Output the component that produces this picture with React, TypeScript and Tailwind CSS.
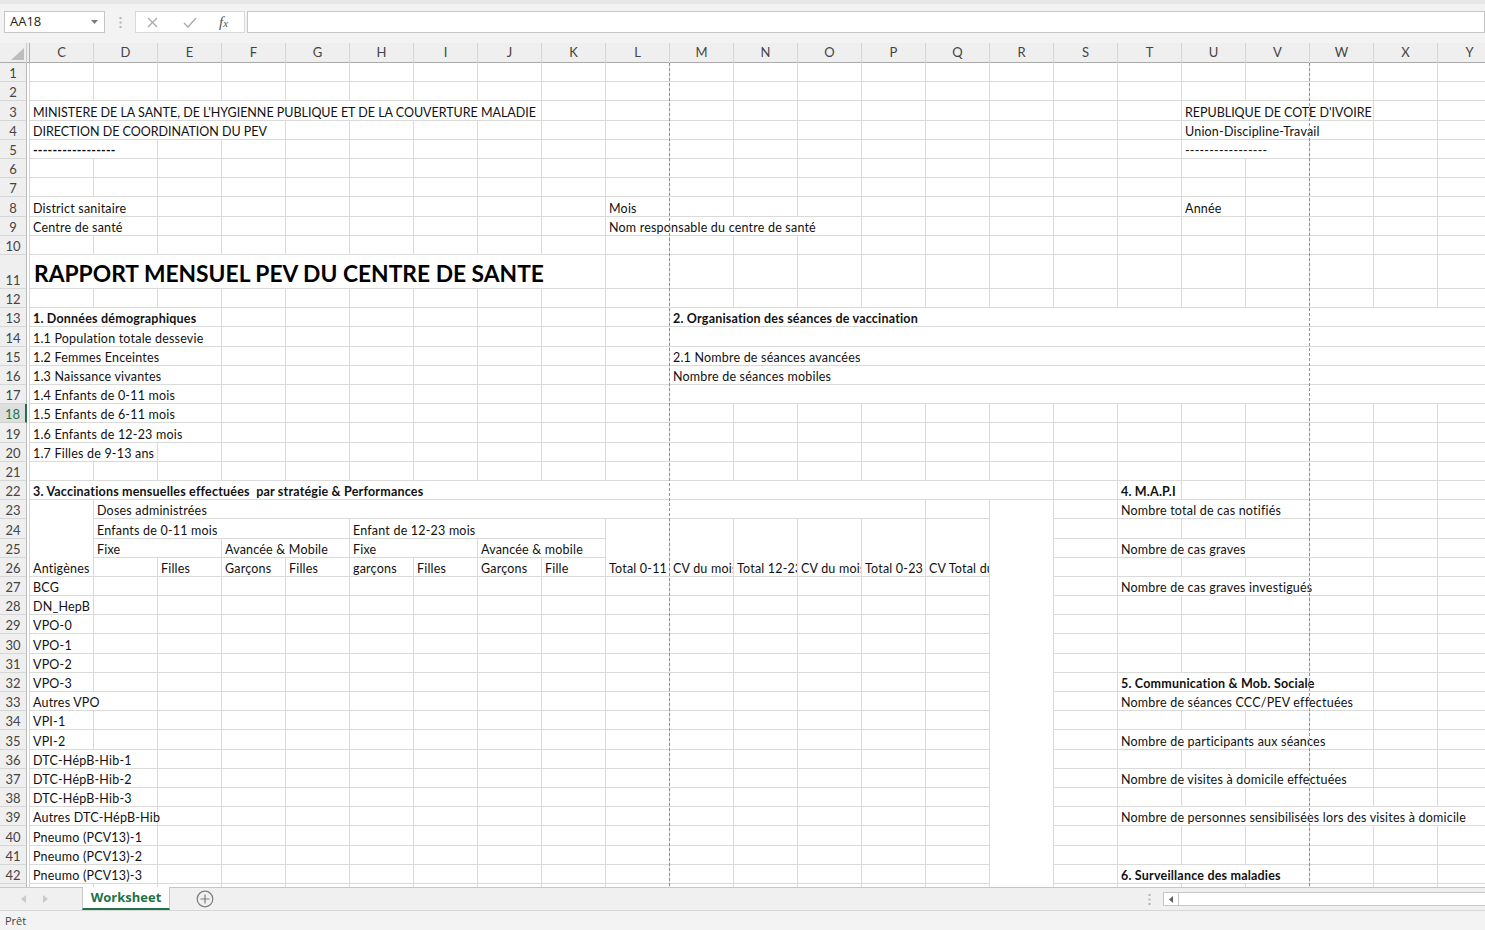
import React from 'react';

const COLS = ['C', 'D', 'E', 'F', 'G', 'H', 'I', 'J', 'K', 'L', 'M', 'N', 'O', 'P', 'Q', 'R', 'S', 'T', 'U', 'V', 'W', 'X', 'Y'];
const ROWS = 43;
const ACTIVE_ROW = 18;

type Cell = {
  r: number;
  c: string;
  cs?: number;
  rs?: number;
  t?: string;
  b?: boolean;
  clip?: boolean;
  big?: boolean;
  caps?: boolean;
};

// cells with text, merged ranges and the span a text overflows into
const CELLS: Cell[] = [
  { r: 3, c: 'C', cs: 8, t: "MINISTERE DE LA SANTE, DE L'HYGIENNE PUBLIQUE ET DE LA COUVERTURE MALADIE", caps: true },
  { r: 3, c: 'U', cs: 3, t: "REPUBLIQUE DE COTE D'IVOIRE", caps: true },
  { r: 4, c: 'C', cs: 4, t: 'DIRECTION DE COORDINATION DU PEV', caps: true },
  { r: 4, c: 'U', cs: 3, t: 'Union-Discipline-Travail' },
  { r: 5, c: 'C', cs: 2, t: '-----------------', b: true },
  { r: 5, c: 'U', cs: 2, t: '-----------------' },
  { r: 8, c: 'C', cs: 2, t: 'District sanitaire' },
  { r: 8, c: 'L', t: 'Mois' },
  { r: 8, c: 'U', t: 'Année' },
  { r: 9, c: 'C', cs: 2, t: 'Centre de santé' },
  { r: 9, c: 'L', cs: 4, t: 'Nom responsable du centre de santé' },
  { r: 11, c: 'C', cs: 9, t: 'RAPPORT MENSUEL PEV DU CENTRE DE SANTE', big: true },
  { r: 13, c: 'C', cs: 3, t: '1. Données démographiques', b: true },
  { r: 13, c: 'M', cs: 13, t: '2. Organisation des séances de vaccination', b: true },
  { r: 14, c: 'C', cs: 3, t: '1.1 Population totale dessevie' },
  { r: 14, c: 'M', cs: 13 },
  { r: 15, c: 'C', cs: 3, t: '1.2 Femmes Enceintes' },
  { r: 15, c: 'M', cs: 13, t: '2.1 Nombre de séances avancées' },
  { r: 16, c: 'C', cs: 3, t: '1.3 Naissance vivantes' },
  { r: 16, c: 'M', cs: 13, t: 'Nombre de séances mobiles' },
  { r: 17, c: 'C', cs: 3, t: '1.4 Enfants de 0-11 mois' },
  { r: 17, c: 'M', cs: 13 },
  { r: 18, c: 'C', cs: 3, t: '1.5 Enfants de 6-11 mois' },
  { r: 19, c: 'C', cs: 3, t: '1.6 Enfants de 12-23 mois' },
  { r: 20, c: 'C', cs: 2, t: '1.7 Filles de 9-13 ans' },
  { r: 22, c: 'C', cs: 16, t: '3. Vaccinations mensuelles effectuées\u00a0 par stratégie & Performances', b: true },
  { r: 22, c: 'T', t: '4. M.A.P.I', b: true },
  { r: 23, c: 'C', rs: 4, t: 'Antigènes' },
  { r: 23, c: 'D', cs: 13, t: 'Doses administrées' },
  { r: 23, c: 'R', rs: 21 },
  { r: 23, c: 'T', cs: 3, t: 'Nombre total de cas notifiés' },
  { r: 24, c: 'D', cs: 4, t: 'Enfants de 0-11 mois' },
  { r: 24, c: 'H', cs: 4, t: 'Enfant de 12-23 mois' },
  { r: 24, c: 'L', rs: 3, t: 'Total 0-11', clip: true },
  { r: 24, c: 'M', rs: 3, t: 'CV du mois', clip: true },
  { r: 24, c: 'N', rs: 3, t: 'Total 12-23', clip: true },
  { r: 24, c: 'O', rs: 3, t: 'CV du mois', clip: true },
  { r: 24, c: 'P', rs: 3, t: 'Total 0-23', clip: true },
  { r: 24, c: 'Q', rs: 3, t: 'CV Total du mois', clip: true },
  { r: 25, c: 'D', cs: 2, t: 'Fixe' },
  { r: 25, c: 'F', cs: 2, t: 'Avancée & Mobile' },
  { r: 25, c: 'H', cs: 2, t: 'Fixe' },
  { r: 25, c: 'J', cs: 2, t: 'Avancée & mobile' },
  { r: 25, c: 'T', cs: 3, t: 'Nombre de cas graves' },
  { r: 26, c: 'E', t: 'Filles' },
  { r: 26, c: 'F', t: 'Garçons' },
  { r: 26, c: 'G', t: 'Filles' },
  { r: 26, c: 'H', t: 'garçons' },
  { r: 26, c: 'I', t: 'Filles' },
  { r: 26, c: 'J', t: 'Garçons' },
  { r: 26, c: 'K', t: 'Fille' },
  { r: 27, c: 'C', t: 'BCG' },
  { r: 27, c: 'T', cs: 4, t: 'Nombre de cas graves investigués' },
  { r: 28, c: 'C', t: 'DN_HepB' },
  { r: 29, c: 'C', t: 'VPO-0' },
  { r: 30, c: 'C', t: 'VPO-1' },
  { r: 31, c: 'C', t: 'VPO-2' },
  { r: 32, c: 'C', t: 'VPO-3' },
  { r: 32, c: 'T', cs: 4, t: '5. Communication & Mob. Sociale', b: true },
  { r: 33, c: 'C', cs: 2, t: 'Autres VPO' },
  { r: 33, c: 'T', cs: 4, t: 'Nombre de séances CCC/PEV effectuées' },
  { r: 34, c: 'C', t: 'VPI-1' },
  { r: 35, c: 'C', t: 'VPI-2' },
  { r: 35, c: 'T', cs: 4, t: 'Nombre de participants aux séances' },
  { r: 36, c: 'C', cs: 2, t: 'DTC-HépB-Hib-1' },
  { r: 37, c: 'C', cs: 2, t: 'DTC-HépB-Hib-2' },
  { r: 37, c: 'T', cs: 4, t: 'Nombre de visites à domicile effectuées' },
  { r: 38, c: 'C', cs: 2, t: 'DTC-HépB-Hib-3' },
  { r: 39, c: 'C', cs: 2, t: 'Autres DTC-HépB-Hib' },
  { r: 39, c: 'T', cs: 6, t: 'Nombre de personnes sensibilisées lors des visites à domicile' },
  { r: 40, c: 'C', cs: 2, t: 'Pneumo (PCV13)-1' },
  { r: 41, c: 'C', cs: 2, t: 'Pneumo (PCV13)-2' },
  { r: 42, c: 'C', cs: 2, t: 'Pneumo (PCV13)-3' },
  { r: 42, c: 'T', cs: 3, t: '6. Surveillance des maladies', b: true },
];

const COL_SPAN: Record<number, string> = {
  1: 'col-span-1', 2: 'col-span-2', 3: 'col-span-3', 4: 'col-span-4', 6: 'col-span-6',
  8: 'col-span-8', 9: 'col-span-9', 13: 'col-span-13', 16: 'col-span-16',
};
const ROW_SPAN: Record<number, string> = { 1: 'row-span-1', 3: 'row-span-3', 4: 'row-span-4', 21: 'row-span-21' };

function Dots({ className }: { className?: string }) {
  return (
    <svg width="3" height="11" viewBox="0 0 3 11" className={className}>
      <rect x="0.5" y="0" width="2" height="2" fill="#b4b4b4" />
      <rect x="0.5" y="4.5" width="2" height="2" fill="#b4b4b4" />
      <rect x="0.5" y="9" width="2" height="2" fill="#b4b4b4" />
    </svg>
  );
}

function FormulaBar() {
  return (
    <div className="h-[43px] shrink-0 bg-[#f3f3f3] border-t-[4px] border-[#e6e6e6]">
      <div className="flex items-center pt-[7px] pl-[4px] h-[29px]">
        <div className="w-[101px] h-[22px] bg-white border border-[#c6c6c6] flex items-center justify-between pl-[5px] pr-[6px] text-[13px] text-[#222] font-['Open_Sans',sans-serif]">
          <span>AA18</span>
          <svg width="7" height="4" viewBox="0 0 7 4">
            <path d="M0 0h7L3.5 4z" fill="#7a7a7a" />
          </svg>
        </div>
        <div className="w-[30px] flex justify-center">
          <Dots />
        </div>
        <div className="w-[110px] h-[22px] bg-white border border-[#d8d8d8] flex items-center">
          <svg width="11" height="11" viewBox="0 0 11 11" className="ml-[11px]">
            <path d="M1 1l9 9M10 1l-9 9" stroke="#a9a9a9" strokeWidth="1.3" />
          </svg>
          <svg width="14" height="11" viewBox="0 0 14 11" className="ml-[25px]">
            <path d="M1 6l4 4 8-9" stroke="#a9a9a9" strokeWidth="1.3" fill="none" />
          </svg>
          <span className="ml-[22px] text-[15px] italic text-[#555] font-['Liberation_Serif',serif] leading-none">
            f<span className="text-[11px]">x</span>
          </span>
        </div>
        <div className="ml-[2px] flex-1 h-[22px] bg-white border border-[#c6c6c6]" />
      </div>
    </div>
  );
}

function ColumnHeaders() {
  return (
    <div className="h-[20px] shrink-0 overflow-hidden">
      <div className="grid grid-cols-[27px_3px_repeat(23,64px)] h-[20px] w-[1502px] bg-[#efefef] border-b border-[#ababab] text-[13px] text-[#444]">
        <div className="relative border-r border-[#c8c8c8]">
          <svg width="13" height="12" viewBox="0 0 13 12" className="absolute right-[2px] bottom-[3px]">
            <path d="M13 0v12H0z" fill="#bdbdbd" />
          </svg>
        </div>
        <div className="border-r border-[#b0b0b0]" />
        {COLS.map((c) => (
          <div key={c} className="flex items-center justify-center border-r border-[#d6d6d6]">
            {c}
          </div>
        ))}
      </div>
    </div>
  );
}

function RowHead({ n }: { n: number }) {
  const active = n === ACTIVE_ROW;
  return (
    <div
      className={
        active
          ? 'flex items-end justify-center bg-[#dedede] border-b border-[#d0d0d0] border-r-2 border-r-[#217346] text-[#217346] text-[13px] leading-[16px]'
          : 'flex items-end justify-center bg-[#efefef] border-b border-[#d6d6d6] border-r border-r-[#b8b8b8] text-[#444] text-[13px] leading-[16px]'
      }
    >
      {n}
    </div>
  );
}

function Body() {
  const byPos = new Map<string, Cell>();
  CELLS.forEach((c) => byPos.set(`${c.r}:${COLS.indexOf(c.c)}`, c));
  const taken = new Set<string>();
  const out: React.ReactNode[] = [];

  for (let r = 1; r <= ROWS; r++) {
    out.push(<RowHead key={'h' + r} n={r} />);
    out.push(<div key={'s' + r} className="bg-white border-r border-[#d4d4d4]" />);
    for (let c = 0; c < COLS.length; c++) {
      if (taken.has(`${r}:${c}`)) continue;
      const cell = byPos.get(`${r}:${c}`);
      const cs = cell?.cs ?? 1;
      const rs = cell?.rs ?? 1;
      for (let i = 0; i < rs; i++) for (let j = 0; j < cs; j++) taken.add(`${r + i}:${c + j}`);
      let text = 'text-[12.5px] leading-[15px] tracking-[0.2px]';
      if (cell?.caps) text = 'text-[12.5px] leading-[15px] tracking-[-0.02px]';
      if (cell?.big) text = 'text-[22.8px] font-bold leading-[29px] pl-[4px] text-black';
      const cls = [
        'flex items-end border-r border-b border-[#dadada] pl-[3px] whitespace-nowrap',
        COL_SPAN[cs],
        ROW_SPAN[rs],
        cell?.clip ? 'overflow-hidden' : '',
        text,
        cell?.b ? 'font-bold' : '',
      ].join(' ');
      out.push(
        <div key={`${r}-${c}`} className={cls}>
          {cell?.t}
        </div>,
      );
    }
  }

  return (
    <div className="relative h-[824px] shrink-0 overflow-hidden">
      <div className="grid grid-cols-[27px_3px_repeat(23,64px)] grid-rows-[repeat(10,19.2px)_34.2px_repeat(32,19.2px)] w-[1502px] text-[#111]">
        {out}
      </div>
      {/* page breaks */}
      <div className="absolute top-0 bottom-0 left-[669px] w-px bg-[repeating-linear-gradient(to_bottom,#8f8f8f_0px,#8f8f8f_3px,transparent_3px,transparent_5px)]" />
      <div className="absolute top-0 bottom-0 left-[1309px] w-px bg-[repeating-linear-gradient(to_bottom,#8f8f8f_0px,#8f8f8f_3px,transparent_3px,transparent_5px)]" />
    </div>
  );
}

function SheetTabs() {
  return (
    <div className="h-[23px] shrink-0 bg-[#f0f0f0] border-t border-[#c6c6c6] flex items-stretch font-['Open_Sans',sans-serif]">
      <div className="w-[82px] flex items-center">
        <svg width="5" height="8" viewBox="0 0 5 8" className="ml-[21px]">
          <path d="M5 0v8L0 4z" fill="#c9c9c9" />
        </svg>
        <svg width="5" height="8" viewBox="0 0 5 8" className="ml-[17px]">
          <path d="M0 0v8l5-4z" fill="#c9c9c9" />
        </svg>
      </div>
      <div className="w-[88px] -mt-px bg-white border-x border-[#c6c6c6] border-b-2 border-b-[#217346] flex items-center justify-center text-[13px] font-bold text-[#217346]">
        Worksheet
      </div>
      <div className="ml-[26px] flex items-center">
        <svg width="18" height="18" viewBox="0 0 18 18">
          <circle cx="9" cy="9" r="7.8" fill="none" stroke="#7d7d7d" strokeWidth="1.2" />
          <path d="M9 4.5v9M4.5 9h9" stroke="#7d7d7d" strokeWidth="1.2" />
        </svg>
      </div>
      <div className="flex-1" />
      <div className="w-[27px] flex items-center justify-center">
        <Dots />
      </div>
      <div className="w-[322px] my-[4px] bg-white border border-[#c6c6c6] border-r-0 flex">
        <div className="w-[15px] border-r border-[#c6c6c6] flex items-center justify-center">
          <svg width="4" height="7" viewBox="0 0 4 7">
            <path d="M4 0v7L0 3.5z" fill="#606060" />
          </svg>
        </div>
      </div>
    </div>
  );
}

function StatusBar() {
  return (
    <div className="h-[20px] shrink-0 bg-[#f3f3f3] border-t border-[#d6d6d6] flex items-center pl-[5px] pt-[2px] text-[11px] text-[#444] font-['Open_Sans',sans-serif]">
      Prêt
    </div>
  );
}

export default function App() {
  return (
    <div className="w-[1485px] h-[930px] overflow-hidden flex flex-col bg-white font-['Lato',sans-serif]">
      <FormulaBar />
      <ColumnHeaders />
      <Body />
      <SheetTabs />
      <StatusBar />
    </div>
  );
}
